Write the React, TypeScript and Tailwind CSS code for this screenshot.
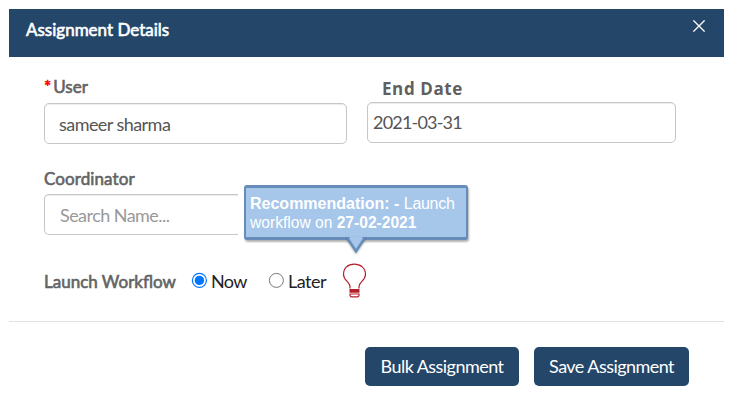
import type { ReactNode } from "react";

const fauxBold = "[-webkit-text-stroke:0.6px_currentColor]";

function Label({ children, className = "" }: { children: ReactNode; className?: string }) {
  return (
    <span className={`block h-6 whitespace-nowrap text-[17px] leading-6 text-[#636363] ${fauxBold} ${className}`}>
      {children}
    </span>
  );
}

function Radio({ checked = false }: { checked?: boolean }) {
  return (
    <svg className="size-4 shrink-0" viewBox="0 0 16 16" fill="none">
      <circle cx="8.4" cy="8.4" r="7" stroke={checked ? "#0075ff" : "#767676"} strokeWidth={checked ? 1.2 : 1} />
      {checked && <circle cx="8.4" cy="8.4" r="4.7" fill="#0075ff" />}
    </svg>
  );
}

function Bulb() {
  return (
    <svg className="h-[35px] w-[25px]" viewBox="0 0 25 35" fill="none" stroke="#b3202a" strokeWidth="1.2">
      <path d="M8 25.5v-2C8 19 1.5 17.5 1.5 11.5C1.5 5 6 1.2 12.3 1.2S23.5 5 23.5 11.5C23.5 17.5 17 19 17 23.5v2" />
      <path d="M7.5 27h10M7.5 28.8h10" strokeWidth="1.9" />
      <path d="M8 31h9v1.2c0 1.2-.8 1.6-1.8 1.6H9.8c-1 0-1.8-.4-1.8-1.6z" />
    </svg>
  );
}

function Recommendation() {
  return (
    <div className="absolute left-[235px] top-[128px] h-[55px] w-[224px] rounded-[3px] border-2 border-t-[3px] border-b-[3px] border-[#668cb9] bg-[#a6c6ea] pl-[4px] pt-[6px] font-['Liberation_Sans',Arial,sans-serif] text-[16px] leading-[19px] text-white shadow-[1px_2px_2px_rgba(0,0,0,0.3)]">
      <p className="whitespace-nowrap"><b>Recommendation: -</b> <span className="tracking-[-0.3px]">Launch</span></p>
      <p className="whitespace-nowrap text-[15.6px]">workflow on <b>27-02-2021</b></p>
      <svg className="absolute left-[101px] top-[49px] h-[17px] w-[18px] drop-shadow-[0_1px_1px_rgba(0,0,0,0.3)]" viewBox="0 0 18 17">
        <path d="M0 0h18v3L9 16.5L0 3z" fill="#668cb9" />
        <path d="M2.5 0h13v2L9 12L2.5 2z" fill="#a6c6ea" />
      </svg>
    </div>
  );
}

export default function App() {
  return (
    <div className="h-[407px] w-[737px] overflow-hidden bg-white pl-[9px] pt-[9px] font-[Lato,sans-serif]">
      <section className="w-[715px]">
        <header className="flex h-12 justify-between bg-[#244668] pl-[17px] pr-[19px] text-white">
          <h1 className={`mt-[9px] h-6 whitespace-nowrap text-[17px] leading-6 ${fauxBold}`}>Assignment Details</h1>
          <svg className="mt-[11px] size-3" viewBox="0 0 12 12" stroke="currentColor" strokeWidth="1.3">
            <path d="M.4.4l11.2 11.2M11.6.4L.4 11.6" />
          </svg>
        </header>

        <main className="relative h-[264px] pl-[35px] pt-[18px]">
          <div className="flex gap-5">
            <div className="w-[303px]">
              <Label><span className="mr-[2px] text-[#ff0000]">*</span>User</Label>
              <div className="mt-1 h-[41px] rounded-[5px] border border-[#c6c6c6] pl-[14px] text-[18px] leading-[41px] tracking-[-0.55px] text-[#555] shadow-[inset_0_1px_1px_rgba(0,0,0,0.075)]">sameer sharma</div>
            </div>
            <div className="w-[309px]">
              <span className="block h-[27px] whitespace-nowrap pl-[15px] pt-[2px] font-['Open_Sans',sans-serif] text-[17px] font-bold leading-6 tracking-[0.6px] text-[#5f5f5f]">End Date</span>
              <div className="h-[41px] rounded-[5px] border border-[#c6c6c6] pl-[5px] text-[18px] leading-[39px] tracking-[-0.8px] text-[#555] shadow-[inset_0_1px_1px_rgba(0,0,0,0.075)]">2021-03-31</div>
            </div>
          </div>

          <div className="mt-[23px] w-[194px]">
            <Label className="tracking-[0.1px]">Coordinator</Label>
            <div className="mt-[3px] h-[41px] rounded-l-[5px] border border-r-0 border-[#c6c6c6] pl-[15px] text-[18px] leading-[40px] tracking-[-0.55px] text-[#999] shadow-[inset_0_1px_1px_rgba(0,0,0,0.075)]">Search Name...</div>
          </div>

          <div className="mt-[27px] flex h-9 items-center text-[18px] text-[#222]">
            <Label className="w-[147px] pt-[2px]">Launch Workflow</Label>
            <Radio checked />
            <span className="ml-[4px] w-[57px] pt-[2px] tracking-[-0.6px]">Now</span>
            <Radio />
            <span className="ml-[4px] w-[54px] pt-[2px] tracking-[-0.5px]">Later</span>
            <Bulb />
          </div>
          <Recommendation />
        </main>

        <footer className="flex h-[85px] justify-end gap-[15px] border-t border-[#e2e2e2] pr-[35px] pt-[25px] text-[18px] tracking-[-0.55px] text-white">
          <button className="h-[39px] w-[154px] whitespace-nowrap rounded-[5px] bg-[#244668]">Bulk Assignment</button>
          <button className="h-[39px] w-[155px] whitespace-nowrap rounded-[5px] bg-[#244668]">Save Assignment</button>
        </footer>
      </section>
    </div>
  );
}
